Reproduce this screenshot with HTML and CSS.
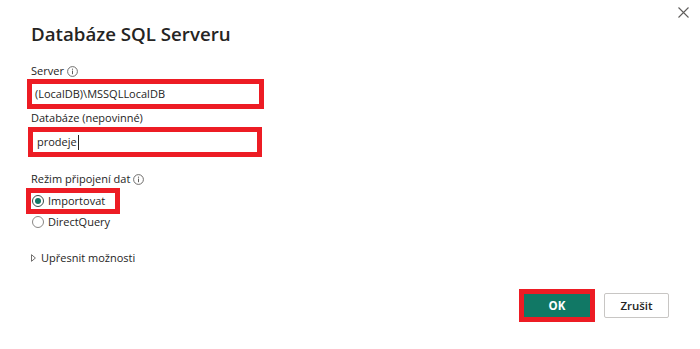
FILE: index.html
```html
<!DOCTYPE html>
<html lang="cs">
<head>
<meta charset="utf-8">
<title>Databáze SQL Serveru</title>
<link rel="stylesheet" href="styles.css">
</head>
<body>
<div class="dialog">
  <div class="header">
    <h1 class="title">Databáze SQL Serveru</h1>
    <button class="close" aria-label="Zavřít">
      <svg width="11" height="11" viewBox="0 0 11 11"><path d="M0.5 0.5L10.5 10.5M10.5 0.5L0.5 10.5" stroke="#605e5c" stroke-width="1.1" fill="none"/></svg>
    </button>
  </div>
  <div class="form">
    <div class="label">Server <span class="info"><svg width="11" height="11" viewBox="0 0 11 11"><circle cx="5.5" cy="5.5" r="4.9" stroke="#605e5c" stroke-width="0.9" fill="none"/><path d="M5.5 4.6V8.2" stroke="#605e5c" stroke-width="1"/><circle cx="5.5" cy="3.2" r="0.6" fill="#605e5c"/></svg></span></div>
    <div class="field field-server">(LocalDB)\MSSQLLocalDB</div>
    <div class="label label-db">Databáze (nepovinné)</div>
    <div class="field field-db">prodeje<span class="caret"></span></div>
    <div class="label label-mode">Režim připojení dat <span class="info"><svg width="11" height="11" viewBox="0 0 11 11"><circle cx="5.5" cy="5.5" r="4.9" stroke="#605e5c" stroke-width="0.9" fill="none"/><path d="M5.5 4.6V8.2" stroke="#605e5c" stroke-width="1"/><circle cx="5.5" cy="3.2" r="0.6" fill="#605e5c"/></svg></span></div>
    <div class="radio radio-selected"><span class="dot dot-on"></span>Importovat</div>
    <div class="radio radio-plain"><span class="dot"></span>DirectQuery</div>
    <div class="advanced"><svg width="5" height="8" viewBox="0 0 5 8"><path d="M0.5 0.7L4.4 4L0.5 7.3Z" stroke="#605e5c" stroke-width="0.9" fill="none" stroke-linejoin="round"/></svg>Upřesnit možnosti</div>
  </div>
  <div class="footer">
    <button class="btn btn-ok">OK</button>
    <button class="btn btn-cancel">Zrušit</button>
  </div>
</div>
</body>
</html>
```
FILE: styles.css
```css
* { box-sizing: border-box; }
html, body { margin: 0; padding: 0; background: #fff; }
body { font-family: "Open Sans", "Noto Sans", sans-serif; color: #252423; }
.dialog { width: 700px; height: 349px; display: flex; flex-direction: column; padding: 7px 11px 0 26px; }
.header { display: flex; justify-content: space-between; align-items: flex-start; }
.title { margin: 14px 0 0 5px; font-size: 18.7px; font-weight: 600; line-height: 26px; color: #252423; }
.close { border: 0; background: none; padding: 0; width: 11px; height: 11px; display: block; }
.close svg { display: block; }
.form { display: flex; flex-direction: column; align-items: flex-start; margin-top: 16px; }
.label { font-size: 11px; line-height: 16px; margin-left: 5px; display: flex; align-items: center; gap: 3px; }
.info svg { display: block; }
.field { border: 5px solid #ed1c24; height: 30px; font-size: 11px; line-height: 20px; color: #252423; display: flex; align-items: center; }
.field-server { width: 237px; margin-left: 1px; padding-left: 3px; }
.label-db { margin-top: 1px; }
.field-db { width: 234px; margin-left: 2px; padding-left: 4px; margin-top: 1px; }
.caret { display: inline-block; width: 1px; height: 15px; background: #252423; margin-left: 1px; }
.label-mode { margin-top: 14px; }
.radio { display: flex; align-items: center; font-size: 11px; line-height: 16px; gap: 4px; }
.radio-selected { border: 5px solid #ed1c24; width: 94px; height: 26px; padding-left: 1px; margin-top: 1px; }
.radio-plain { margin: 0 0 0 6px; height: 16px; }
.dot { width: 12px; height: 12px; border-radius: 50%; border: 1px solid #8a8886; background: #fff; display: inline-block; position: relative; }
.dot-on { border-color: #3b4e48; }
.dot-on::after { content: ""; position: absolute; left: 2px; top: 2px; width: 6px; height: 6px; border-radius: 50%; background: #117865; }
.advanced { display: flex; align-items: center; gap: 5px; font-size: 11px; line-height: 16px; margin: 20px 0 0 5px; }
.advanced svg { display: block; }
.footer { display: flex; justify-content: flex-end; align-items: center; gap: 9px; margin-top: auto; margin-bottom: 27px; padding-right: 20px; }
.btn { font-family: inherit; font-size: 11.5px; cursor: pointer; }
.btn-ok { border: 5px solid #ed1c24; background: #117865; color: #fff; font-weight: 700; width: 76px; height: 33px; padding: 0; }
.btn-cancel { border: 1px solid #c8c6c4; border-radius: 2px; background: #fff; color: #252423; width: 65px; height: 25px; padding: 0; font-weight: 600; }
```
